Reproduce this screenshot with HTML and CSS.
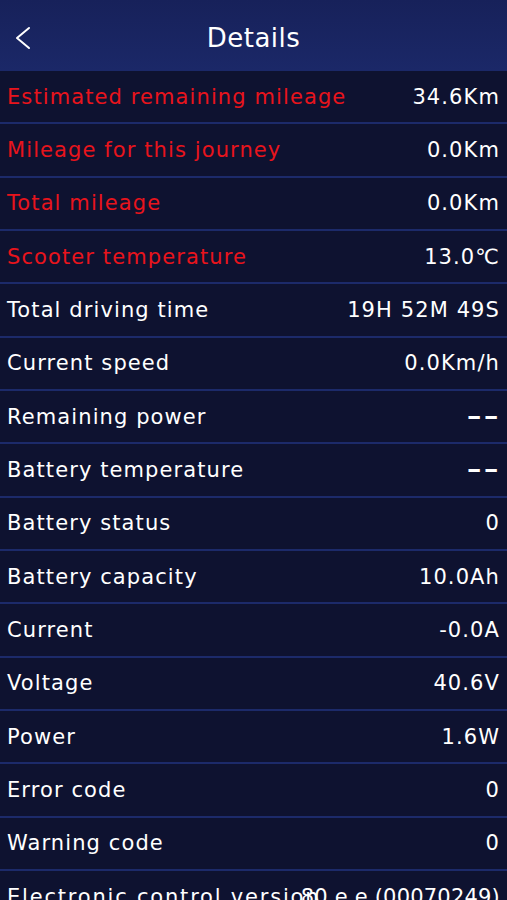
FILE: index.html
```html
<!DOCTYPE html>
<html lang="en">

<head>
    <meta charset="UTF-8">
    <meta name="viewport" content="width=device-width, initial-scale=1.0">
    <title>Details</title>
    <link rel="stylesheet" href="styles.css">
</head>

<body>
    <div class="header">
        <button class="back">
            <svg width="18" height="24" viewBox="0 0 18 24">
                <polyline points="15,2 3,12 15,22" fill="none" stroke="#fff" stroke-width="2" stroke-linecap="round" stroke-linejoin="round" />
            </svg>
        </button>
        <h1>Details</h1>
    </div>

    <div class="list">
        <div class="row warn"><span class="label">Estimated remaining mileage</span><span class="value">34.6Km</span></div>
        <div class="row warn"><span class="label">Mileage for this journey</span><span class="value">0.0Km</span></div>
        <div class="row warn"><span class="label">Total mileage</span><span class="value">0.0Km</span></div>
        <div class="row warn"><span class="label">Scooter temperature</span><span class="value">13.0℃</span></div>
        <div class="row"><span class="label">Total driving time</span><span class="value">19H 52M 49S</span></div>
        <div class="row"><span class="label">Current speed</span><span class="value">0.0Km/h</span></div>
        <div class="row"><span class="label">Remaining power</span><span class="value empty">--</span></div>
        <div class="row"><span class="label">Battery temperature</span><span class="value empty">--</span></div>
        <div class="row"><span class="label">Battery status</span><span class="value">0</span></div>
        <div class="row"><span class="label">Battery capacity</span><span class="value">10.0Ah</span></div>
        <div class="row"><span class="label">Current</span><span class="value">-0.0A</span></div>
        <div class="row"><span class="label">Voltage</span><span class="value">40.6V</span></div>
        <div class="row"><span class="label">Power</span><span class="value">1.6W</span></div>
        <div class="row"><span class="label">Error code</span><span class="value">0</span></div>
        <div class="row"><span class="label">Warning code</span><span class="value">0</span></div>
        <div class="row"><span class="label long">Electronic control version</span><span class="value version">80 e e (00070249)</span></div>
    </div>
</body>

</html>
```

FILE: styles.css
```css
body {
    font-family: 'DejaVu Sans', sans-serif;
    background-color: #0e1230;
    color: #fff;
    margin: 0;
    overflow: hidden;
}

.header {
    height: 71px;
    box-sizing: border-box;
    padding-top: 5px;
    display: flex;
    align-items: center;
    justify-content: center;
    position: relative;
    background: linear-gradient(#17215a, #1b2868);
}

.header h1 {
    margin: 0;
    font-size: 26px;
    font-weight: normal;
    letter-spacing: 0.5px;
}

.back {
    position: absolute;
    left: 14px;
    top: 26px;
    padding: 0;
    border: none;
    background: none;
    cursor: pointer;
}

.back svg {
    display: block;
}

.row {
    height: 51.33px;
    display: flex;
    align-items: center;
    padding: 0 7px;
    border-bottom: 2px solid #1c2a6a;
    font-size: 21px;
    letter-spacing: 1.1px;
}

.row .label {
    flex: 1 1 0;
    min-width: 0;
    white-space: nowrap;
}

.row .label.long {
    letter-spacing: 1.8px;
}

.row .value {
    flex: none;
    white-space: nowrap;
}

.row .value.empty {
    display: inline-block;
    letter-spacing: 1px;
    font-weight: bold;
    transform: scaleX(1.75);
    transform-origin: right center;
}

.row .value.version {
    letter-spacing: 0.2px;
}

.row.warn .label {
    color: #e8141c;
}
```
